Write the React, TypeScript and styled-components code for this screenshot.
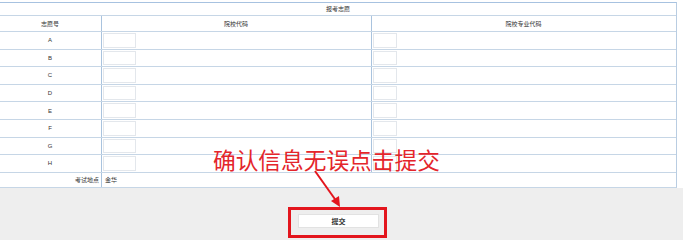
import * as React from "react";
import styled, { createGlobalStyle } from "styled-components";

const GlobalStyle = createGlobalStyle`
  html, body {
    margin: 0;
    padding: 0;
    background: #ffffff;
    font-family: "Liberation Sans", "Noto Sans CJK SC", sans-serif;
  }
`;

const Page = styled.div`
  position: relative;
  width: 683px;
  height: 240px;
  overflow: hidden;
  background: #ffffff;
  padding-top: 2px;
  box-sizing: border-box;
`;

const Sheet = styled.div`
  width: 677px;
  border-top: 1px solid #a7c2e0;
  border-right: 1px solid #b9cde2;
  border-bottom: 1px solid #c6d6e6;
  box-sizing: border-box;
  background: #ffffff;
`;

const Caption = styled.div`
  height: 12px;
  line-height: 12px;
  text-align: center;
  font-size: 6px;
  color: #333;
  border-bottom: 1px solid #c6d6e6;
`;

const Row = styled.div<{ $h: number; $last?: boolean }>`
  display: grid;
  grid-template-columns: 102px 270px 1fr;
  height: ${(p) => p.$h}px;
  border-bottom: ${(p) => (p.$last ? "none" : "1px solid #c6d6e6")};
`;

const LocRow = styled.div`
  display: grid;
  grid-template-columns: 102px 1fr;
  height: 14px;
`;

const Cell = styled.div<{ $align?: string; $divider?: boolean }>`
  display: flex;
  align-items: center;
  justify-content: ${(p) => p.$align || "center"};
  font-size: 6px;
  color: #333;
  padding: 1px 2px 1px 1px;
  box-sizing: border-box;
  border-right: ${(p) => (p.$divider ? "1px solid #a9c3de" : "none")};
`;

const Input = styled.div<{ $w: number }>`
  width: ${(p) => p.$w}px;
  height: 100%;
  background: #ffffff;
  border: 1px solid #e3e7ec;
  box-sizing: border-box;
`;

const Footer = styled.div`
  width: 683px;
  height: 52px;
  background: #eeeeee;
  display: flex;
  justify-content: center;
  padding-top: 26px;
  padding-right: 6px;
  box-sizing: border-box;
`;

const SubmitButton = styled.button`
  width: 81px;
  height: 14px;
  background: #ffffff;
  border: 1px solid #e2e2e2;
  font-family: "Noto Sans CJK SC", sans-serif;
  font-size: 7px;
  font-weight: 700;
  color: #333;
  padding: 0;
  line-height: 12px;
`;

const Note = styled.div`
  position: absolute;
  left: 213px;
  top: 145px;
  font-family: "Noto Sans CJK SC", sans-serif;
  font-size: 22.7px;
  line-height: 30px;
  color: #e4252b;
  white-space: nowrap;
`;

const Frame = styled.div`
  position: absolute;
  left: 288px;
  top: 207px;
  width: 99px;
  height: 31px;
  border: 3px solid #e3151d;
  box-sizing: border-box;
`;

const Arrow = styled.svg`
  position: absolute;
  left: 300px;
  top: 160px;
`;

const picks = ["A", "B", "C", "D", "E", "F", "G", "H"];

export default function App() {
  return (
    <>
      <GlobalStyle />
      <Page>
        <Sheet>
          <Caption>报考志愿</Caption>
          <Row $h={15}>
            <Cell $divider>志愿号</Cell>
            <Cell $divider>院校代码</Cell>
            <Cell>院校专业代码</Cell>
          </Row>
          {picks.map((p) => (
            <Row key={p} $h={16.6}>
              <Cell $divider>{p}</Cell>
              <Cell $divider $align="flex-start">
                <Input $w={33} />
              </Cell>
              <Cell $align="flex-start">
                <Input $w={24} />
              </Cell>
            </Row>
          ))}
          <LocRow>
            <Cell $divider $align="flex-end">考试地点</Cell>
            <Cell $align="flex-start" style={{ paddingLeft: 3 }}>金华</Cell>
          </LocRow>
        </Sheet>
        <Footer>
          <SubmitButton>提交</SubmitButton>
        </Footer>
        <Note>确认信息无误点击提交</Note>
        <Arrow width="50" height="50" viewBox="0 0 50 50">
          <line x1="15" y1="11" x2="37" y2="42" stroke="#e3151d" strokeWidth="2" />
          <polygon points="40,47 31,41 39,36" fill="#e3151d" />
        </Arrow>
        <Frame />
      </Page>
    </>
  );
}
